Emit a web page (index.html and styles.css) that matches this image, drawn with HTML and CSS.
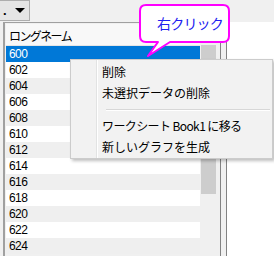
FILE: index.html
```html
<!DOCTYPE html>
<html lang="ja">
<head>
    <meta charset="UTF-8">
    <title>ワークシート一覧</title>
    <link rel="stylesheet" href="styles.css">
</head>
<body>
    <div class="toolbar">
        <div class="combo"><span class="dot">.</span><span class="arrow"></span></div>
    </div>

    <div class="main">
        <div class="list-pane">
            <div class="grid">
                <div class="rows">
                    <div class="header">ロングネーム</div>
                    <div class="row selected">600</div>
                    <div class="row">602</div>
                    <div class="row">604</div>
                    <div class="row">606</div>
                    <div class="row">608</div>
                    <div class="row">610</div>
                    <div class="row">612</div>
                    <div class="row">614</div>
                    <div class="row">616</div>
                    <div class="row">618</div>
                    <div class="row">620</div>
                    <div class="row">622</div>
                    <div class="row">624</div>
                </div>
                <div class="scrollbar">
                    <div class="thumb"></div>
                </div>
            </div>
        </div>
        <div class="splitter"></div>
        <div class="side-pane"></div>
    </div>

    <!-- callout over the list -->
    <div class="callout">
        <svg width="94" height="56" viewBox="0 0 94 56">
            <path d="M7 2 H84 Q90 2 90 8 V33 Q90 39 84 39 H31 L9 53 L19 39 H7 Q1 39 1 33 V8 Q1 2 7 2 Z"
                  fill="#fff" stroke="#ff00ff" stroke-width="2" stroke-linejoin="round"/>
        </svg>
        <span class="callout-text">右クリック</span>
    </div>

    <!-- context menu -->
    <div class="menu">
        <div class="menu-item">削除</div>
        <div class="menu-item">未選択データの削除</div>
        <div class="menu-sep"></div>
        <div class="menu-item narrow">ワークシート Book1 に移る</div>
        <div class="menu-item">新しいグラフを生成</div>
    </div>
</body>
</html>
```

FILE: styles.css
```css
body {
    margin: 0;
    width: 274px;
    height: 256px;
    overflow: hidden;
    background: #f0f0f0;
    font-family: 'Noto Sans CJK JP', sans-serif;
    position: relative;
}
.toolbar {
    height: 22px;
    background: #f0f0f0;
}
.combo {
    width: 30px;
    height: 21px;
    border: 1px solid #adadad;
    border-left: none;
    background: #e5e5e5;
    display: flex;
    align-items: center;
    box-sizing: border-box;
}
.dot {
    font-family: 'Liberation Sans', sans-serif;
    font-size: 13px;
    line-height: 12px;
    margin-left: 3px;
    margin-top: 1px;
    width: 11px;
    font-weight: bold;
}
.arrow {
    width: 0;
    height: 0;
    border-left: 5px solid transparent;
    border-right: 5px solid transparent;
    border-top: 5px solid #000;
    margin-left: 1px;
}
.main {
    display: flex;
    height: 234px;
}
.list-pane {
    margin-left: 3px;
    width: 214px;
    border-left: 2px solid #a0a0a0;
    border-top: 1px solid #a0a0a0;
    border-right: 1px solid #828282;
    background: #f0f0f0;
    padding: 1px 0 0 1px;
}
.grid {
    display: flex;
    height: 100%;
}
.rows {
    width: 194px;
}
.header {
    height: 21px;
    background: #f8f8f8;
    font-size: 12px;
    line-height: 23px;
    padding-left: 3px;
    letter-spacing: -1.6px;
    color: #000;
    border-bottom: 1px solid #e5e5e5;
}
.row {
    height: 16px;
    line-height: 16px;
    font-family: 'Liberation Sans', sans-serif;
    font-size: 12px;
    padding-left: 3px;
    background: #efefef;
    color: #000;
    letter-spacing: -0.6px;
}
.row:nth-child(odd) {
    background: #fff;
}
.row.selected {
    background: #0078d7;
    color: #fff;
}
.scrollbar {
    width: 18px;
    background: #f0f0f0;
    padding-top: 21px;
}
.thumb {
    width: 15px;
    margin-left: 1px;
    height: 149px;
    background: #cdcdcd;
}
.splitter {
    width: 5px;
    background: #f0f0f0;
    border-right: 1px solid #828282;
}
.side-pane {
    flex: 1;
    background: #fff;
}
.callout {
    position: absolute;
    left: 139px;
    top: 3px;
    width: 94px;
    height: 56px;
}
.callout svg {
    position: absolute;
    left: 0;
    top: 0;
}
.callout-text {
    position: absolute;
    left: 18px;
    top: 10px;
    font-size: 14px;
    line-height: 20px;
    color: #2020f0;
    letter-spacing: -0.8px;
}
.menu {
    position: absolute;
    left: 70px;
    top: 59px;
    width: 201px;
    height: 97px;
    border: 1px solid #cccccc;
    background: #f2f2f2;
    box-shadow: 2px 2px 3px rgba(0, 0, 0, 0.25);
    padding-top: 1px;
}
.menu::before {
    content: '';
    position: absolute;
    left: 25px;
    top: 0;
    bottom: 0;
    width: 1px;
    background: #e2e3e3;
    border-right: 1px solid #fff;
}
.menu-item {
    height: 21px;
    line-height: 21px;
    font-size: 12px;
    padding-left: 31px;
    color: #000;
}
.menu-item.narrow {
    letter-spacing: -0.6px;
}
.menu-sep {
    height: 1px;
    margin: 6px 2px 4px 35px;
    background: #d7d7d7;
    border-bottom: 1px solid #fff;
}
```
